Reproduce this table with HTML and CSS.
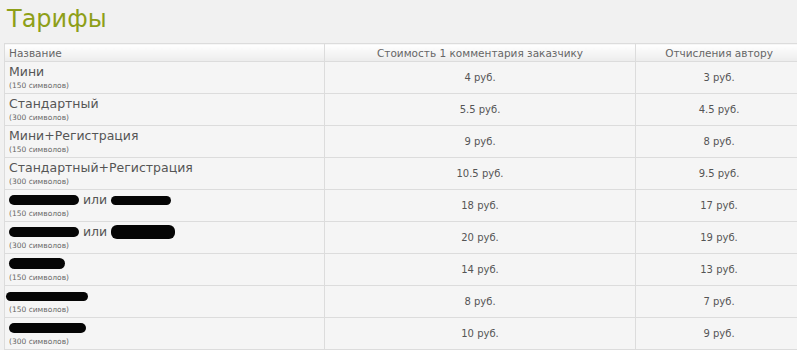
FILE: index.html
```html
<!DOCTYPE html>
<html lang="ru">
<head>
<meta charset="utf-8">
<title>Тарифы</title>
<link rel="stylesheet" href="styles.css">
</head>
<body>
<h1 class="title">Тарифы</h1>
<table class="tariffs">
  <colgroup>
    <col class="c-name">
    <col class="c-cost">
    <col class="c-author">
  </colgroup>
  <thead>
    <tr>
      <th class="th-name">Название</th>
      <th>Стоимость 1 комментария заказчику</th>
      <th>Отчисления автору</th>
    </tr>
  </thead>
  <tbody>
    <tr>
      <td class="name"><div class="n">Мини</div><div class="s">(150 символов)</div></td>
      <td>4 руб.</td><td>3 руб.</td>
    </tr>
    <tr>
      <td class="name"><div class="n">Стандартный</div><div class="s">(300 символов)</div></td>
      <td>5.5 руб.</td><td>4.5 руб.</td>
    </tr>
    <tr>
      <td class="name"><div class="n">Мини+Регистрация</div><div class="s">(150 символов)</div></td>
      <td>9 руб.</td><td>8 руб.</td>
    </tr>
    <tr>
      <td class="name"><div class="n">Стандартный+Регистрация</div><div class="s">(300 символов)</div></td>
      <td>10.5 руб.</td><td>9.5 руб.</td>
    </tr>
    <tr>
      <td class="name"><div class="n"><span class="redact r1"></span> или <span class="redact r2"></span></div><div class="s">(150 символов)</div></td>
      <td>18 руб.</td><td>17 руб.</td>
    </tr>
    <tr>
      <td class="name"><div class="n"><span class="redact r1"></span> или <span class="redact r3"></span></div><div class="s">(300 символов)</div></td>
      <td>20 руб.</td><td>19 руб.</td>
    </tr>
    <tr>
      <td class="name"><div class="n"><span class="redact r4"></span></div><div class="s">(150 символов)</div></td>
      <td>14 руб.</td><td>13 руб.</td>
    </tr>
    <tr>
      <td class="name"><div class="n"><span class="redact r5"></span></div><div class="s">(150 символов)</div></td>
      <td>8 руб.</td><td>7 руб.</td>
    </tr>
    <tr>
      <td class="name"><div class="n"><span class="redact r6"></span></div><div class="s">(300 символов)</div></td>
      <td>10 руб.</td><td>9 руб.</td>
    </tr>
  </tbody>
</table>
</body>
</html>
```
FILE: styles.css
```css
html, body {
  margin: 0;
  background: #f1f1f1;
  overflow: hidden;
}
body {
  padding: 5px 0 0 4px;
  font-family: "DejaVu Sans", Verdana, sans-serif;
  color: #555;
}
.title {
  margin: 0 0 10px 0;
  padding-left: 3px;
  font-size: 24px;
  font-weight: normal;
  line-height: 28px;
  color: #8e9f18;
}
.tariffs {
  border-collapse: collapse;
  table-layout: fixed;
  width: 798px;
  background: #f5f5f5;
}
.c-name { width: 320px; }
.c-cost { width: 311px; }
.c-author { width: 167px; }
.tariffs th, .tariffs td {
  border: 1px solid #dcdcdc;
  padding: 0 4px;
}
.tariffs th {
  height: 17px;
  font-size: 10.5px;
  font-weight: normal;
  color: #666;
  text-align: center;
  background: linear-gradient(#ffffff, #ececec);
}
.tariffs th.th-name { text-align: left; }
.tariffs tbody tr {
  height: 32px;
}
.tariffs td {
  font-size: 10px;
  text-align: center;
  color: #555;
  vertical-align: middle;
}
.tariffs td.name {
  text-align: left;
}
.n {
  font-size: 12.5px;
  line-height: 16px;
  color: #555;
  white-space: nowrap;
}
.s {
  font-size: 7.5px;
  line-height: 11px;
  color: #666;
}
.redact {
  display: inline-block;
  height: 10px;
  background: #050505;
  border-radius: 6px;
  vertical-align: -1px;
}
.r1 { width: 70px; }
.r2 { width: 60px; height: 9px; }
.r3 { width: 64px; height: 14px; vertical-align: -3px; }
.r4 { width: 56px; height: 11px; }
.r5 { width: 82px; height: 9px; margin-left: -3px; }
.r6 { width: 77px; height: 10px; }
```
